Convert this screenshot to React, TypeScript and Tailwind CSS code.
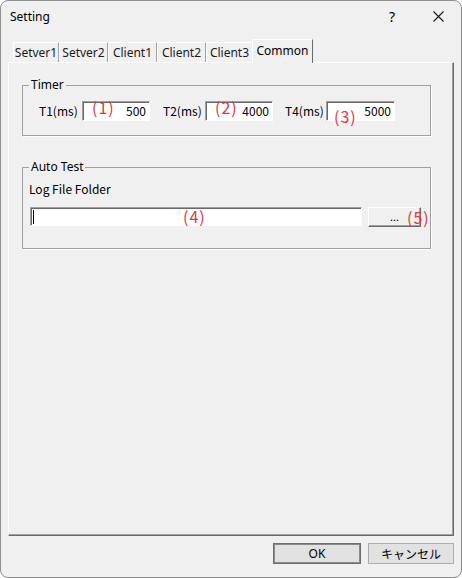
import React from "react";

const ui = { fontFamily: '"Noto Sans", "Open Sans", sans-serif' };
const jp = { fontFamily: '"Noto Sans CJK JP", "Noto Sans", sans-serif' };
const mark = { fontFamily: '"Noto Sans CJK JP", "Noto Sans", sans-serif' };

const tabs = [
    {label: "Setver1", w: "w-[46px]"},
    {label: "Setver2", w: "w-[49px]"},
    {label: "Client1", w: "w-[49px]"},
    {label: "Client2", w: "w-[49px]"},
    {label: "Client3", w: "w-[47px]"},
];

const Mark: React.FC<{ n: number; className: string }> = ({n, className}) => (
    <span
        style={mark}
        className={"absolute text-[16px] leading-[16px] tracking-[1px] text-[#dc3a3e] pointer-events-none whitespace-nowrap " + className}
    >
        ({n})
    </span>
);

const NumBox: React.FC<{ value: string; w: string; children?: React.ReactNode }> = ({value, w, children}) => (
    <div className={"relative h-[20px] " + w}>
        <div
            style={jp}
            className="h-full w-full bg-white border border-t-[#a0a0a0] border-l-[#a0a0a0] border-r-white border-b-white shadow-[inset_1px_1px_0_#696969] flex items-center justify-end pr-[3px] text-[12px] text-black"
        >
            {value}
        </div>
        {children}
    </div>
);

const App: React.FC = () => {
    return (
        <div className="w-[462px] h-[578px] bg-white">
            <div className="w-full h-full flex flex-col bg-[#f0f0f0] border border-[#8f8f8f] rounded-[8px] overflow-hidden">
                {/* title bar */}
                <div className="h-[31px] flex items-center shrink-0">
                    <span style={ui} className="pl-[9px] text-[12px] text-black">Setting</span>
                    <div className="ml-auto flex h-full">
                        <div style={ui} className="w-[46px] h-full flex items-center justify-center text-[14px] text-black">?</div>
                        <div className="w-[46px] h-full flex items-center justify-center">
                            <svg width="11" height="11" viewBox="0 0 11 11">
                                <path d="M0.5 0.5 L10.5 10.5 M10.5 0.5 L0.5 10.5" stroke="#1a1a1a" strokeWidth="1.1" fill="none"/>
                            </svg>
                        </div>
                    </div>
                </div>

                {/* tabs */}
                <div className="h-[30px] flex items-end pl-[12px] shrink-0">
                    {tabs.map((t) => (
                        <div
                            key={t.label}
                            style={ui}
                            className={"h-[20px] flex items-center justify-center text-[12px] text-[#1a1a1a] border-t border-l border-t-white border-l-white border-r border-r-[#a0a0a0] shadow-[1px_0_0_#fff] " + t.w}
                        >
                            {t.label}
                        </div>
                    ))}
                    <div
                        style={ui}
                        className="relative z-10 -mb-px h-[24px] w-[61px] -ml-px flex items-center justify-center pb-[1px] text-[12px] text-black bg-[#f0f0f0] border-t border-l border-t-white border-l-white border-r border-r-[#696969]"
                    >
                        Common
                    </div>
                </div>

                {/* panel */}
                <div className="ml-[7px] w-[446px] h-[474px] shrink-0 border border-t-white border-l-white border-r-[#696969] border-b-[#696969] shadow-[inset_-1px_-1px_0_#a0a0a0] pl-[13px] pt-[15px]">
                    <fieldset className="w-[409px] h-[58px] border border-[#a0a0a0] shadow-[1px_1px_0_#fff]">
                        <legend style={ui} className="ml-[6px] px-[2px] text-[12px] leading-[14px] text-black">Timer</legend>
                        <div style={jp} className="flex items-center mt-[9px] pl-[16px] text-[12px] text-black">
                            <span className="w-[43px]">T1(ms)</span>
                            <NumBox value="500" w="w-[68px]">
                                <Mark n={1} className="left-[10px] -top-[2px]"/>
                            </NumBox>
                            <span className="ml-[13px] w-[42px]">T2(ms)</span>
                            <NumBox value="4000" w="w-[68px]">
                                <Mark n={2} className="left-[10px] -top-[2px]"/>
                            </NumBox>
                            <span className="ml-[12px] w-[41px]">T4(ms)</span>
                            <NumBox value="5000" w="w-[69px]">
                                <Mark n={3} className="left-[8px] top-[7px]"/>
                            </NumBox>
                        </div>
                    </fieldset>

                    <fieldset className="mt-[24px] w-[409px] h-[89px] border border-[#a0a0a0] shadow-[1px_1px_0_#fff]">
                        <legend style={ui} className="ml-[6px] px-[2px] text-[12px] leading-[14px] text-black">Auto Test</legend>
                        <div style={jp} className="mt-[8px] pl-[6px] text-[12px] leading-[14px] text-black">Log File Folder</div>
                        <div className="mt-[11px] pl-[7px] flex items-start">
                            <div className="relative w-[332px] h-[19px]">
                                <div className="h-full w-full bg-white border border-t-[#a0a0a0] border-l-[#a0a0a0] border-r-white border-b-white shadow-[inset_1px_1px_0_#696969] flex items-center pl-[2px]">
                                    <span className="w-px h-[14px] bg-black"/>
                                </div>
                                <Mark n={4} className="left-[153px] top-[1px]"/>
                            </div>
                            <div className="relative ml-[6px] w-[53px] h-[20px]">
                                <div style={ui} className="h-full w-full bg-[#f0f0f0] border border-t-white border-l-white border-r-[#696969] border-b-[#696969] shadow-[inset_-1px_-1px_0_#a0a0a0] flex items-center justify-center text-[11px] leading-none text-black pb-[2px]">
                                    ...
                                </div>
                                <Mark n={5} className="left-[39px] top-[2px]"/>
                            </div>
                        </div>
                    </fieldset>
                </div>

                {/* buttons */}
                <div className="mt-[7px] flex justify-end gap-[7px] pr-[7px]">
                    <button style={ui} className="w-[88px] h-[21px] bg-[#e1e1e1] border border-[#6f6f6f] shadow-[inset_0_0_0_1px_#8a8a8a] text-[12px] text-black">
                        OK
                    </button>
                    <button style={jp} className="w-[86px] h-[21px] bg-[#e1e1e1] border border-[#adadad] text-[12px] text-black">
                        キャンセル
                    </button>
                </div>
            </div>
        </div>
    );
};

export default App;
